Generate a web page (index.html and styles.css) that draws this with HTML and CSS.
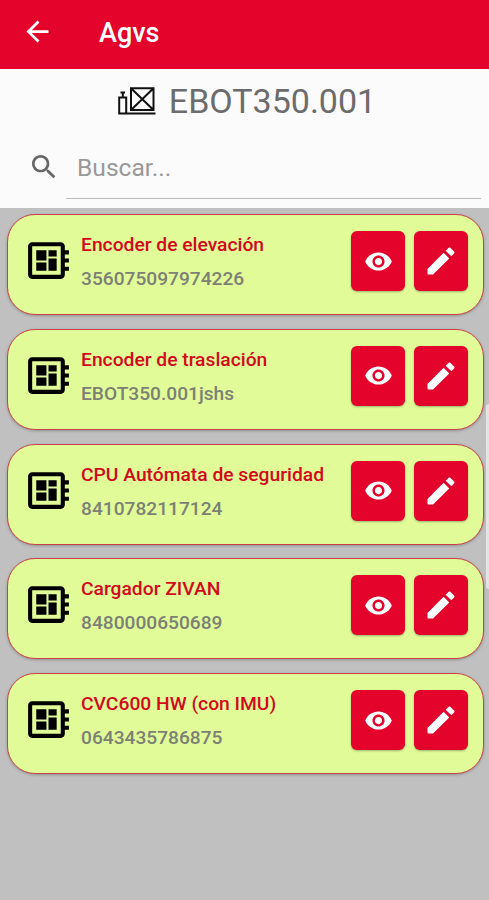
FILE: index.html
```html
<!DOCTYPE html>
<html lang="es">
<head>
    <meta charset="UTF-8">
    <meta name="viewport" content="width=device-width, initial-scale=1.0">
    <title>Agvs</title>
    <link rel="stylesheet" href="styles.css">
</head>
<body>
    <!-- Shared icons -->
    <svg class="sprite" aria-hidden="true">
        <symbol id="icon-board" viewBox="0 0 24 24">
            <path d="M22 9V7h-2V5c0-1.1-.9-2-2-2H4c-1.1 0-2 .9-2 2v14c0 1.1.9 2 2 2h14c1.1 0 2-.9 2-2v-2h2v-2h-2v-2h2v-2h-2V9h2zm-4 10H4V5h14v14zM6 13h5v4H6zm6-6h4v3h-4zM6 7h5v5H6zm6 4h4v6h-4z"/>
        </symbol>
        <symbol id="icon-eye" viewBox="0 0 24 24">
            <path d="M12 4.500C7 4.500 2.730 7.610 1 12c1.730 4.390 6 7.500 11 7.500s9.270-3.110 11-7.500c-1.730-4.390-6-7.500-11-7.500zM12 17c-2.760 0-5-2.240-5-5s2.240-5 5-5 5 2.240 5 5-2.240 5-5 5zm0-8c-1.660 0-3 1.340-3 3s1.340 3 3 3 3-1.340 3-3-1.340-3-3-3z"/>
        </symbol>
        <symbol id="icon-edit" viewBox="0 0 24 24">
            <path d="M3 17.460v3.040c0 .28.22.5.5.5h3.040c.13 0 .26-.05.35-.15L17.500 10.250l-3.750-3.750L3.150 17.100c-.1.1-.15.22-.15.360zM20.710 7.040c.39-.39.39-1.020 0-1.410l-2.340-2.340c-.39-.39-1.020-.39-1.410 0l-1.830 1.830 3.750 3.750 1.830-1.830z"/>
        </symbol>
    </svg>

    <header class="toolbar">
        <svg class="back-icon" viewBox="0 0 24 24"><path d="M20 11H7.830l5.590-5.590L12 4l-8 8 8 8 1.410-1.410L7.830 13H20v-2z"/></svg>
        <h1 class="toolbar-title">Agvs</h1>
    </header>

    <section class="agv-header">
        <div class="agv-name">
            <svg class="agv-icon" viewBox="0 0 38 30">
                <path d="M1.200 11.500h7v16h-7zM4.800 11V7M2.500 6.500H7M8 27.500h29.500"/>
                <path d="M13 2.200h22.500V24H13zM13 2.200L35.500 24M35.500 2.200L13 24"/>
            </svg>
            <span>EBOT350.001</span>
        </div>
        <div class="search">
            <svg class="search-icon" viewBox="0 0 24 24"><path d="M15.500 14h-.79l-.28-.27C15.410 12.590 16 11.110 16 9.500 16 5.910 13.090 3 9.500 3S3 5.910 3 9.500 5.910 16 9.500 16c1.610 0 3.090-.59 4.230-1.570l.27.28v.79l5 4.990L20.490 19l-4.990-5zm-6 0C7.010 14 5 11.990 5 9.500S7.010 5 9.500 5 14 7.010 14 9.500 11.990 14 9.500 14z"/></svg>
            <input class="search-input" type="text" placeholder="Buscar...">
        </div>
    </section>

    <main class="list">
        <div class="card">
            <svg class="board-icon"><use href="#icon-board"/></svg>
            <div class="info">
                <div class="name">Encoder de elevación</div>
                <div class="code">356075097974226</div>
            </div>
            <button class="btn"><svg class="eye-icon"><use href="#icon-eye"/></svg></button>
            <button class="btn"><svg class="edit-icon"><use href="#icon-edit"/></svg></button>
        </div>
        <div class="card">
            <svg class="board-icon"><use href="#icon-board"/></svg>
            <div class="info">
                <div class="name">Encoder de traslación</div>
                <div class="code">EBOT350.001jshs</div>
            </div>
            <button class="btn"><svg class="eye-icon"><use href="#icon-eye"/></svg></button>
            <button class="btn"><svg class="edit-icon"><use href="#icon-edit"/></svg></button>
        </div>
        <div class="card">
            <svg class="board-icon"><use href="#icon-board"/></svg>
            <div class="info">
                <div class="name">CPU Autómata de seguridad</div>
                <div class="code">8410782117124</div>
            </div>
            <button class="btn"><svg class="eye-icon"><use href="#icon-eye"/></svg></button>
            <button class="btn"><svg class="edit-icon"><use href="#icon-edit"/></svg></button>
        </div>
        <div class="card">
            <svg class="board-icon"><use href="#icon-board"/></svg>
            <div class="info">
                <div class="name">Cargador ZIVAN</div>
                <div class="code">8480000650689</div>
            </div>
            <button class="btn"><svg class="eye-icon"><use href="#icon-eye"/></svg></button>
            <button class="btn"><svg class="edit-icon"><use href="#icon-edit"/></svg></button>
        </div>
        <div class="card">
            <svg class="board-icon"><use href="#icon-board"/></svg>
            <div class="info">
                <div class="name">CVC600 HW (con IMU)</div>
                <div class="code">0643435786875</div>
            </div>
            <button class="btn"><svg class="eye-icon"><use href="#icon-eye"/></svg></button>
            <button class="btn"><svg class="edit-icon"><use href="#icon-edit"/></svg></button>
        </div>
    </main>
    <div class="edge-handle"></div>
</body>
</html>
```
FILE: styles.css
```css
:root {
    --red: #e4032b;
    --lime: #e1fb98;
}
* {
    box-sizing: border-box;
}
body {
    margin: 0;
    height: 900px;
    overflow: hidden;
    position: relative;
    display: flex;
    flex-direction: column;
    background: #c0c0c0;
    font-family: Roboto, sans-serif;
}
svg {
    display: block;
    flex: none;
}
.sprite {
    position: absolute;
    width: 0;
    height: 0;
}
.toolbar {
    height: 69px;
    flex: none;
    display: flex;
    align-items: center;
    padding: 0 0 6px 21px;
    background: var(--red);
    color: #fff;
}
.back-icon {
    width: 33px;
    height: 33px;
    fill: #fff;
}
.toolbar-title {
    margin: 2px 0 0 45px;
    font-size: 27px;
    font-weight: 500;
}
.agv-header {
    height: 139px;
    flex: none;
    background: #fbfbfb;
}
.agv-name {
    height: 64px;
    display: flex;
    align-items: center;
    justify-content: center;
    gap: 13px;
    padding-left: 5px;
    font-size: 34px;
    color: #6c6c6c;
}
.agv-icon {
    width: 38px;
    height: 30px;
    fill: none;
    stroke: #111;
    stroke-width: 2;
}
.search {
    height: 66px;
    display: flex;
    align-items: center;
    padding: 0 8px 0 28px;
}
.search-icon {
    width: 32px;
    height: 32px;
    margin-top: 2px;
    fill: #666;
}
.search-input {
    flex: 1;
    min-width: 0;
    height: 66px;
    margin-left: 6px;
    padding: 3px 11px 0;
    border: none;
    border-bottom: 1px solid #bbb;
    background: none;
    outline: none;
    font-family: inherit;
    font-size: 24.600px;
}
.search-input::placeholder {
    color: #999;
}
.list {
    display: flex;
    flex-direction: column;
    gap: 13.750px;
    padding: 6px 5px 0 7px;
}
.card {
    height: 101px;
    display: flex;
    align-items: flex-start;
    padding: 16px 15px 0 16px;
    background: var(--lime);
    border: 1px solid #c9404a;
    border-radius: 28px;
    box-shadow: 0 1px 3px rgba(0, 0, 0, 0.25);
}
.board-icon {
    width: 49px;
    height: 49px;
    margin-top: 5px;
}
.info {
    flex: 1;
    margin-left: 8px;
    white-space: nowrap;
}
.name,
.code {
    font-size: 19.150px;
    line-height: 34px;
    font-weight: 500;
}
.name {
    margin-top: -3px;
    font-size: 19.250px;
    color: #d20a1c;
}
.code {
    color: #7b8175;
}
.btn {
    width: 54px;
    height: 60px;
    margin-left: 9px;
    padding: 0;
    display: flex;
    align-items: center;
    justify-content: center;
    border: none;
    border-radius: 6px;
    background: var(--red);
    box-shadow: 0 1px 2px rgba(0, 0, 0, 0.3);
    fill: #fff;
}
.eye-icon {
    width: 29px;
    height: 29px;
}
.edit-icon {
    width: 36px;
    height: 36px;
}
/* Pull handle over the right edge of the screen */
.edge-handle {
    position: absolute;
    top: 404px;
    right: 0;
    width: 3px;
    height: 185px;
    border-radius: 3px 0 0 3px;
    background: #e4e4e4;
}
```
